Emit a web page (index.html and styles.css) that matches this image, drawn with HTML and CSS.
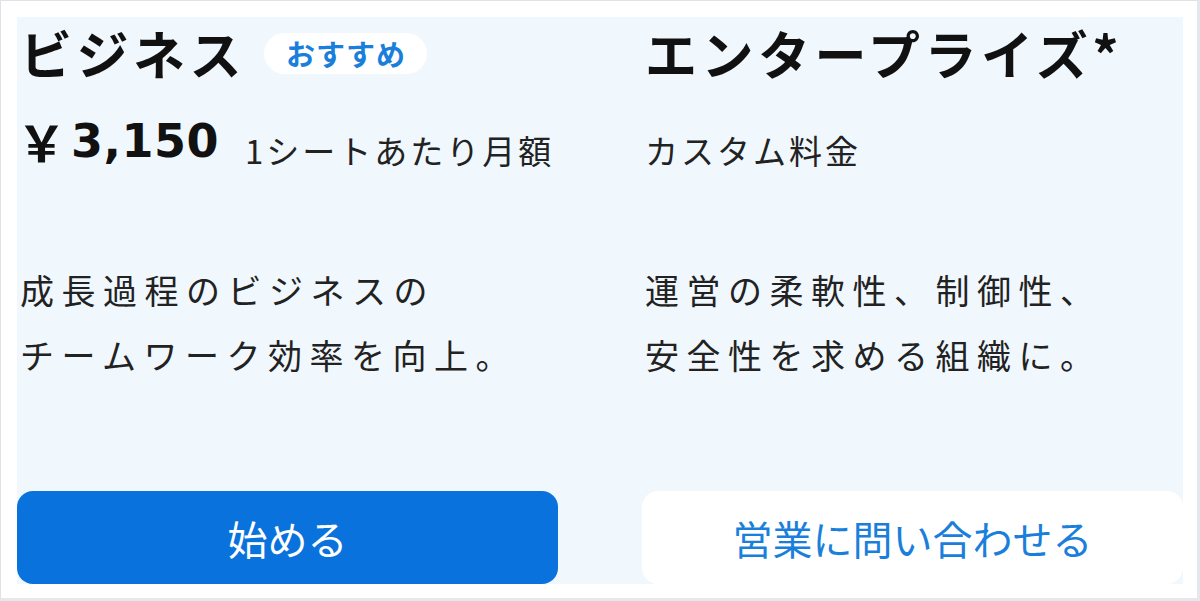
FILE: index.html
```html
<!DOCTYPE html>
<html lang="ja">
<head>
  <meta charset="UTF-8">
  <meta name="viewport" content="width=device-width, initial-scale=1">
  <title>プラン</title>
  <link rel="stylesheet" href="styles.css">
</head>
<body>
  <div class="frame">
    <div class="plans">
      <!-- ビジネスプラン -->
      <section class="plan">
        <div class="plan-head">
          <h2 class="plan-name">ビジネス</h2>
          <span class="badge">おすすめ</span>
        </div>
        <p class="price">
          <span class="yen">￥</span><span class="amount">3,150</span>
          <span class="unit">1シートあたり月額</span>
        </p>
        <p class="desc">成長過程のビジネスの<br>チームワーク効率を向上。</p>
        <a class="btn btn-primary" href="#">始める</a>
      </section>

      <!-- エンタープライズプラン -->
      <section class="plan">
        <div class="plan-head">
          <h2 class="plan-name">エンタープライズ*</h2>
        </div>
        <p class="price">
          <span class="unit">カスタム料金</span>
        </p>
        <p class="desc">運営の柔軟性、制御性、<br>安全性を求める組織に。</p>
        <a class="btn btn-secondary" href="#">営業に問い合わせる</a>
      </section>
    </div>
  </div>
</body>
</html>
```

FILE: styles.css
```css
/* ベース */
html, body {
  margin: 0;
  padding: 0;
  background: #fff;
}
body {
  font-family: "Noto Sans CJK JP", "Noto Sans", sans-serif;
  color: #111;
}
.frame {
  box-sizing: border-box;
  width: 1200px;
  height: 601px;
  padding: 16px 14px 14px 16px;
  border: 1px solid #dfe3e8;
  border-right: 3px solid #e4e7eb;
  border-bottom: 3px solid #e4e7eb;
}
/* プラン一覧 */
.plans {
  height: 100%;
  background: #f0f7fd;
  display: grid;
  grid-template-columns: 541px 541px;
  column-gap: 84px;
}
.plan {
  display: flex;
  flex-direction: column;
  padding-left: 3px;
}
.plan-head {
  display: flex;
  align-items: center;
  gap: 18px;
  height: 72px;
}
.plan-name {
  margin: 0;
  font-size: 52px;
  font-weight: 700;
  letter-spacing: 4.5px;
  line-height: 1;
}
.badge {
  background: #fff;
  color: #1a7fdb;
  font-size: 29px;
  font-weight: 700;
  letter-spacing: 1px;
  padding: 0 21px 0 22px;
  height: 41px;
  line-height: 41px;
  border-radius: 21px;
}
/* 料金：数字と単位は下揃え */
.price {
  margin: 15px 0 0;
  display: flex;
  align-items: flex-end;
  height: 60px;
}
.yen {
  font-size: 49px;
  font-weight: 700;
  line-height: 50px;
  margin: 0 5px -2px -3px;
}
.amount {
  font-family: "DejaVu Sans", sans-serif;
  font-size: 46px;
  font-weight: 700;
  line-height: 50px;
  letter-spacing: 0.5px;
  margin: 0 26px -2px 0;
}
.unit {
  font-size: 33px;
  line-height: 33px;
  letter-spacing: 3px;
  color: #222;
  margin-bottom: -3px;
}
/* 説明 */
.desc {
  margin: 93px 0 0;
  font-size: 34px;
  line-height: 65px;
  letter-spacing: 7.5px;
  color: #222;
}
/* ボタン */
.btn {
  margin-top: auto;
  margin-left: -3px;
  height: 93px;
  border-radius: 16px;
  display: flex;
  align-items: center;
  justify-content: center;
  font-size: 40px;
  text-decoration: none;
}
.btn-primary {
  background: #0a72dc;
  color: #fff;
}
.btn-secondary {
  background: #fff;
  color: #1a7fdb;
}
```
